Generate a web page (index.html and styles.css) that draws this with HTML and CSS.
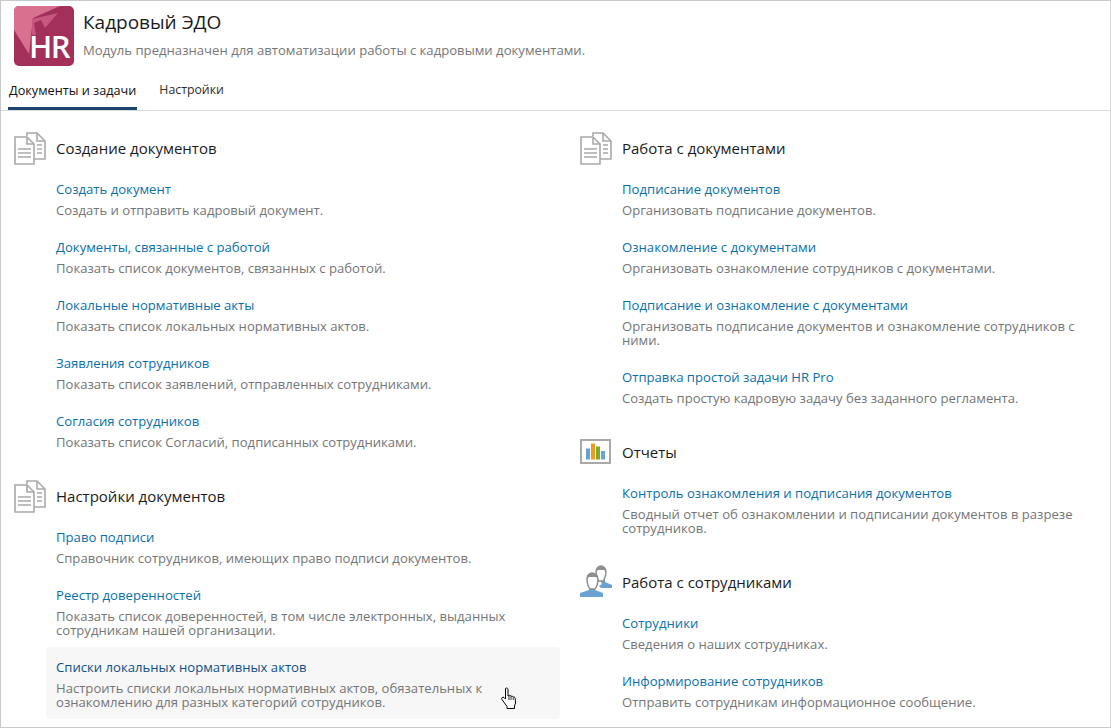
FILE: index.html
```html
<!DOCTYPE html>
<html lang="ru">
<head>
<meta charset="utf-8">
<title>Кадровый ЭДО</title>
<link rel="stylesheet" href="styles.css">
</head>
<body>
<svg width="0" height="0" class="defs">
  <symbol id="docs" viewBox="0 0 33 33">
    <g fill="none" stroke="#a9a9a9" stroke-width="1.600">
      <path d="M13 4V1h10l8 8v18h-12"/>
      <path d="M23 1v8h8"/>
      <path d="M1 5h12l7 7v20H1z" fill="#fff"/>
      <path d="M13 5v7h7"/>
    </g>
    <g stroke="#a9a9a9" stroke-width="1.500">
      <path d="M4 17h13M4 21h13M4 25h13"/>
      <path d="M23 13h5M23 17h5M23 21h5"/>
    </g>
  </symbol>
</svg>
<div class="page">
  <header class="head">
    <div class="brand">
      <svg class="logo" viewBox="0 0 60 60" width="60" height="60" aria-hidden="true">
        <rect width="60" height="60" rx="5" fill="#a32f5b"/>
        <path d="M5 0H46L19 12L17 30L15 48L0 24V5A5 5 0 0 1 5 0z" fill="#d8708f"/>
        <path d="M18 13L44 7L31 22L27 14L20 17L22 29L18 29z" fill="#c6577f"/>
        <text x="15" y="52" class="logo-text">HR</text>
      </svg>
      <div class="brand-text">
        <h1 class="title">Кадровый ЭДО</h1>
        <p class="subtitle">Модуль предназначен для автоматизации работы с кадровыми документами.</p>
      </div>
    </div>
    <nav class="tabs">
      <a class="tab tab-active">Документы и задачи</a>
      <a class="tab tab-plain">Настройки</a>
    </nav>
  </header>
  <main class="columns">
    <div class="col">
      <section class="group">
        <div class="group-head"><svg class="group-icon"><use href="#docs"/></svg><h2>Создание документов</h2></div>
        <div class="item"><a>Создать документ</a><p>Создать и отправить кадровый документ.</p></div>
        <div class="item"><a>Документы, связанные с работой</a><p>Показать список документов, связанных с работой.</p></div>
        <div class="item"><a>Локальные нормативные акты</a><p>Показать список локальных нормативных актов.</p></div>
        <div class="item"><a>Заявления сотрудников</a><p>Показать список заявлений, отправленных сотрудниками.</p></div>
        <div class="item"><a>Согласия сотрудников</a><p>Показать список Согласий, подписанных сотрудниками.</p></div>
      </section>
      <section class="group">
        <div class="group-head"><svg class="group-icon"><use href="#docs"/></svg><h2>Настройки документов</h2></div>
        <div class="item"><a>Право подписи</a><p>Справочник сотрудников, имеющих право подписи документов.</p></div>
        <div class="item"><a>Реестр доверенностей</a><p>Показать список доверенностей, в том числе электронных, выданных сотрудникам нашей организации.</p></div>
        <div class="item item-hover"><a>Списки локальных нормативных актов</a><p>Настроить списки локальных нормативных актов, обязательных к ознакомлению для разных категорий сотрудников.</p>
          <svg class="cursor" viewBox="0 0 16 23" width="16" height="23" aria-hidden="true">
            <path d="M4.500 1.500c1-1 2.500-.5 2.500 1V9l1-.5c1-.5 2 0 2 1 .8-.6 2-.3 2.200.7.800-.5 2-.1 2 1.200l.3 4.600-1 3v2.500H6v-2L1 12.500c-1-1.500.8-3 2-2l1.500 1.500z" fill="#fff" stroke="#000" stroke-width="1" stroke-linejoin="round"/>
            <path d="M8 9v4M10 9.500V13M12.200 10.500V13" stroke="#000" stroke-width=".8" fill="none"/>
          </svg>
        </div>
      </section>
    </div>
    <div class="col">
      <section class="group">
        <div class="group-head"><svg class="group-icon"><use href="#docs"/></svg><h2>Работа с документами</h2></div>
        <div class="item"><a>Подписание документов</a><p>Организовать подписание документов.</p></div>
        <div class="item"><a>Ознакомление с документами</a><p>Организовать ознакомление сотрудников с документами.</p></div>
        <div class="item"><a>Подписание и ознакомление с документами</a><p>Организовать подписание документов и ознакомление сотрудников с ними.</p></div>
        <div class="item"><a>Отправка простой задачи HR Pro</a><p>Создать простую кадровую задачу без заданного регламента.</p></div>
      </section>
      <section class="group">
        <div class="group-head">
          <svg class="group-icon" viewBox="0 0 33 33" aria-hidden="true">
            <rect x="1" y="4" width="29" height="23" fill="#fff" stroke="#a9a9a9" stroke-width="2"/>
            <rect x="6" y="12.500" width="4" height="11" fill="#6aa2d2"/>
            <rect x="11" y="7.500" width="4" height="16" fill="#f09a1d"/>
            <rect x="16" y="10.500" width="4" height="13" fill="#7aab2e"/>
            <rect x="21" y="15" width="4" height="8.500" fill="#6aa2d2"/>
          </svg>
          <h2>Отчеты</h2>
        </div>
        <div class="item"><a>Контроль ознакомления и подписания документов</a><p>Сводный отчет об ознакомлении и подписании документов в разрезе сотрудников.</p></div>
      </section>
      <section class="group">
        <div class="group-head">
          <svg class="group-icon" viewBox="0 0 33 33" aria-hidden="true">
            <path d="M20 14h5v2l7 3v3H21l-2-2 3-2z" fill="#6aa2d2"/>
            <path d="M16 6c0-4 3-6 5-6s5 2 5 6c0 3-1 6-2.500 9h-5C17 12 16 9 16 6z" fill="#fff" stroke="#8f8f8f" stroke-width="1.500"/>
            <path d="M16 6c0-4 3-6 5-6s5 2 5 6l-2-2h-6z" fill="#8f8f8f"/>
            <path d="M9 22h6v2l8 3v4H0v-4l9-3z" fill="#6aa2d2"/>
            <path d="M7 13c0-4 2.500-6 5-6s6 2 6 6c0 4-1.500 8-3 10H10c-1.500-2-3-6-3-10z" fill="#fff" stroke="#8f8f8f" stroke-width="1.500"/>
            <path d="M7 13c0-4 2.500-6 5-6s6 2 6 6l-2-2H9z" fill="#8f8f8f"/>
          </svg>
          <h2>Работа с сотрудниками</h2>
        </div>
        <div class="item"><a>Сотрудники</a><p>Сведения о наших сотрудниках.</p></div>
        <div class="item"><a>Информирование сотрудников</a><p>Отправить сотрудникам информационное сообщение.</p></div>
      </section>
    </div>
  </main>
</div>
</body>
</html>
```
FILE: styles.css
```css
* { box-sizing: border-box; }
html, body { margin: 0; height: 100%; }
body {
  background: #fff;
  font-family: "Open Sans", "Noto Sans", sans-serif;
  font-size: 13px;
  overflow: hidden;
}
.defs { position: absolute; }
.page {
  width: 1111px;
  height: 728px;
  border: 1px solid #c8c8c8;
  border-right-color: #d6d6d6;
  overflow: hidden;
}
.head {
  height: 110px;
  border-bottom: 1px solid #d9d9d9;
  display: flex;
  flex-direction: column;
}
.brand {
  display: flex;
  padding: 5px 0 0 13px;
  gap: 9px;
  height: 78px;
}
.logo { flex: none; }
.logo-text {
  font: 600 31px "Open Sans", sans-serif;
  letter-spacing: -1.500px;
  fill: #fff;
}
.brand-text { padding-top: 3px; }
.title {
  margin: 0;
  font-size: 19px;
  font-weight: 400;
  line-height: 26px;
  color: #1b1b1b;
}
.subtitle {
  margin: 6px 0 0;
  font-size: 13.130px;
  line-height: 18px;
  color: #777;
}
.tabs {
  display: flex;
  padding-left: 7px;
  gap: 21px;
  flex: 1;
}
.tab {
  height: 31px;
  padding: 3px 1px 0;
  line-height: 16px;
  font-size: 12.700px;
  color: #2e2e2e;
}
.tab-plain { font-size: 12.300px; }
.tab-active {
  border-bottom: 3px solid #1b4670;
  color: #111;
}
.columns {
  display: grid;
  grid-template-columns: 566px 1fr;
}
.col { padding-left: 13px; }
.group { margin-top: 16px; }
.group-head {
  display: flex;
  align-items: center;
  height: 42px;
  gap: 9px;
}
.group-icon { width: 33px; height: 33px; flex: none; overflow: visible; }
.group-head h2 {
  margin: 0;
  font-size: 15px;
  font-weight: 400;
  color: #1b1b1b;
}
.item {
  position: relative;
  margin-left: 32px;
  width: 514px;
  padding: 10px 30px 10px 10px;
  border-radius: 4px;
}
.col + .col .item { width: 478px; padding-right: 0; }
.item a {
  display: block;
  height: 20px;
  line-height: 20px;
  font-size: 13.130px;
  color: #0b6fa8;
}
.item p {
  margin: 4px 0 0;
  font-size: 13.100px;
  line-height: 14px;
  color: #757575;
}
.item-hover { background: #f7f7f7; }
.item-hover a { color: #0f4f85; }
.cursor {
  position: absolute;
  left: 455px;
  top: 40px;
}
```
